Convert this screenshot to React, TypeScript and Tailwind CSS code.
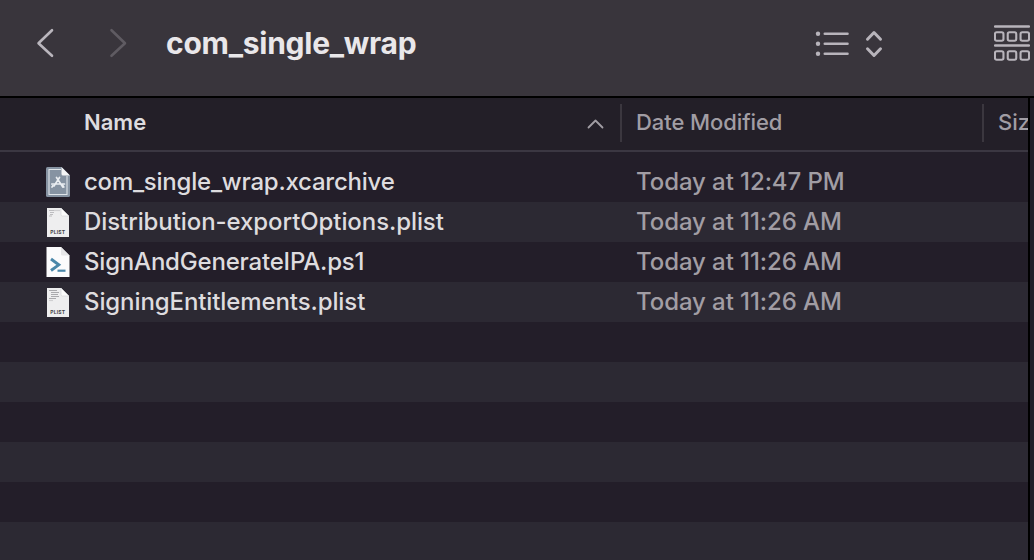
import React from 'react';

type Kind = 'archive' | 'plist' | 'plistFull' | 'script';

interface Entry {
  name: string;
  date: string;
  kind: Kind;
  row: string;
  nameClass: string;
}

const entries: Entry[] = [
  { name: 'com_single_wrap.xcarchive', date: 'Today at 12:47 PM', kind: 'archive', row: 'bg-[#231e29]', nameClass: 'tracking-[-0.230px]' },
  { name: 'Distribution-exportOptions.plist', date: 'Today at 11:26 AM', kind: 'plist', row: 'bg-[#2c2933]', nameClass: 'tracking-[-0.080px]' },
  { name: 'SignAndGenerateIPA.ps1', date: 'Today at 11:26 AM', kind: 'script', row: 'bg-[#231e29]', nameClass: 'tracking-[-0.200px]' },
  { name: 'SigningEntitlements.plist', date: 'Today at 11:26 AM', kind: 'plistFull', row: 'bg-[#2c2933]', nameClass: 'tracking-[-0.100px]' },
];

const emptyRows = ['bg-[#231e29]', 'bg-[#2c2933]', 'bg-[#231e29]', 'bg-[#2c2933]', 'bg-[#231e29]', 'bg-[#2c2933]'];

function FileIcon({ kind }: { kind: Kind }) {
  if (kind === 'archive') {
    return (
      <svg className="h-10 w-7 shrink-0" viewBox="0 1 28 40" fill="none">
        <path d="M3.500 7H17.500L26 15.500V35.500Q26 37 24.500 37H3.500Q2 37 2 35.500V8.500Q2 7 3.500 7Z" fill="#8693a2" />
        <path d="M17 9.500H5V34.500H23V16" stroke="#dfe4e9" strokeWidth="1.100" />
        <path d="M17.500 7L26 15.500H19Q17.500 15.500 17.500 14Z" fill="#f4f5f6" />
        <g stroke="#e9edf1" strokeWidth="1.700" strokeLinecap="round">
          <path d="M12.500 17.500L18.800 27M15.500 17.500L10 26M7.800 24H15.500M18 24H20.500" />
          <path d="M8 27L9 25.500M19.800 27L18.500 25" />
        </g>
      </svg>
    );
  }
  if (kind === 'script') {
    return (
      <svg className="h-10 w-7 shrink-0" viewBox="0 0 28 40" fill="none">
        <path d="M2.500 6H17L25.500 14.500V36H2.500Z" fill="#fbfbfc" />
        <path d="M17 6L25.500 14.500H18.500Q17 14.500 17 13Z" fill="#e6e6e8" />
        <path d="M7 18L14.800 23.800L7 29.500" stroke="#4a87a9" strokeWidth="2.900" />
        <path d="M13.500 29.700H21.500" stroke="#4a87a9" strokeWidth="2.200" />
      </svg>
    );
  }
  return (
    <svg className="h-10 w-7 shrink-0" viewBox="0 0 28 40" fill="none">
      <path d="M3 7H17L25 15V36H3Z" fill="#eeeeef" />
      {kind === 'plist' ? (
        <g stroke="#bdbdc0" strokeWidth="1.200">
          <path d="M5 9.500H10M6 11.500H10M6 13.500H9M5 15H8" />
          <path d="M10 9.500H16" stroke="#d0d0d2" />
        </g>
      ) : (
        <g stroke="#aaaaad" strokeWidth="1.200">
          <path d="M5 9.500H13M7 11.500H15M7 13.500H14M7 15.500H15M5 17.500H12" />
          <path d="M5 19.500H9" stroke="#cfcfd1" />
        </g>
      )}
      <path d="M17 7L25 15H18.500Q17 15 17 13.500Z" fill="#fcfcfc" stroke="#cacacc" strokeWidth="0.500" />
      <text x="6.200" y="33" className="font-['Inter'] text-[5px] font-bold" fill="#444447" textLength="15" lengthAdjust="spacing">
        PLIST
      </text>
    </svg>
  );
}

function GroupIcon() {
  const cells = [0.950, 13.750, 26.550];
  return (
    <svg className="h-9 w-9 shrink-0" viewBox="0 0 36 36" fill="none" stroke="#b8b4bb">
      <path d="M1 1.500H35M1 20.500H35" strokeWidth="2.400" strokeLinecap="round" />
      {cells.map((x) => (
        <React.Fragment key={x}>
          <rect x={x} y="7.200" width="8.500" height="8.500" rx="1.700" strokeWidth="2.100" />
          <rect x={x} y="26.200" width="8.500" height="8.500" rx="1.700" strokeWidth="2.100" />
        </React.Fragment>
      ))}
    </svg>
  );
}

export default function App() {
  return (
    <div className="flex h-[560px] w-[1034px] flex-col overflow-hidden bg-[#231e29] font-['Inter','Liberation_Sans',sans-serif] text-[24px] leading-10 whitespace-nowrap text-[#dedcdf]">
      <header className="flex h-[98px] shrink-0 border-b-2 border-black bg-[#39353c]">
        <div className="flex h-[88px] items-center pl-9">
          <svg className="h-8 w-[18px]" viewBox="0 0 18 32" fill="none" stroke="#bab6bd" strokeWidth="2.600" strokeLinecap="round" strokeLinejoin="round">
            <path d="M16 2.200L2.500 15.200L16 27.800" />
          </svg>
          <svg className="ml-[55px] h-8 w-[18px]" viewBox="0 0 18 32" fill="none" stroke="#5f5b62" strokeWidth="2.600" strokeLinecap="round" strokeLinejoin="round">
            <path d="M2.500 2.200L16 15.200L2.500 27.800" />
          </svg>
          <h1 className="ml-[39px] w-[649px] pb-0.5 text-[30px] font-bold tracking-[-0.250px] text-[#e9e7ea]">com_single_wrap</h1>
          <svg className="h-8 w-9" viewBox="0 0 36 32" fill="none" stroke="#b8b4bb" strokeWidth="2.600" strokeLinecap="round">
            <path d="M9.800 5.800H32.500M9.800 15.800H32.500M9.800 25.800H32.500" />
            <g fill="#b8b4bb" stroke="none">
              <circle cx="3" cy="5.800" r="2.200" />
              <circle cx="3" cy="15.800" r="2.200" />
              <circle cx="3" cy="25.800" r="2.200" />
            </g>
          </svg>
          <svg className="ml-[14px] h-8 w-[18px]" viewBox="0 0 18 32" fill="none" stroke="#b8b4bb" strokeWidth="3" strokeLinecap="round" strokeLinejoin="round">
            <path d="M2.500 11.200L9 4.500L15.500 11.200M2.500 20.800L9 27.500L15.500 20.800" />
          </svg>
          <div className="ml-[111px] flex pb-[3px]">
            <GroupIcon />
          </div>
        </div>
      </header>
      <div className="flex min-h-0 flex-1">
        <main className="w-[1028px] shrink-0 overflow-hidden">
          <div className="flex h-[54px] border-b-2 border-[#3b3742] bg-[#231f28] pt-[6px] text-[22px] leading-9 font-medium text-[#a19da4]">
            <div className="flex h-[38px] w-[622px] shrink-0 border-r-2 border-[#3b373f] pl-[84px]">
              <span className="w-[503px] font-semibold text-[#dedcdf]">Name</span>
              <svg className="mt-3 h-4 w-[18px]" viewBox="0 0 18 16" fill="none" stroke="#a19da4" strokeWidth="1.800" strokeLinecap="round" strokeLinejoin="round">
                <path d="M1.500 11.500L8.500 4.500L15.500 11.500" />
              </svg>
            </div>
            <div className="h-[38px] w-[362px] shrink-0 border-r-2 border-[#3b373f] pl-[14px] tracking-[-0.080px]">Date Modified</div>
            <div className="shrink-0 pl-[14px]">Size</div>
          </div>
          <div className="pt-[10px]">
            {entries.map((entry) => (
              <div key={entry.name} className={`flex h-10 items-center font-[450] ${entry.row}`}>
                <div className="flex w-[636px] items-center pl-11">
                  <div className="flex pb-0.5">
                    <FileIcon kind={entry.kind} />
                  </div>
                  <span className={`ml-3 ${entry.nameClass}`}>{entry.name}</span>
                </div>
                <span className="tracking-[-0.080px] text-[#a19da4]">{entry.date}</span>
              </div>
            ))}
            {emptyRows.map((tone, i) => (
              <div key={i} className={`h-10 ${tone}`} />
            ))}
          </div>
        </main>
        <div className="w-[6px] shrink-0 border-l-2 border-black bg-[#231e29]" />
      </div>
    </div>
  );
}
